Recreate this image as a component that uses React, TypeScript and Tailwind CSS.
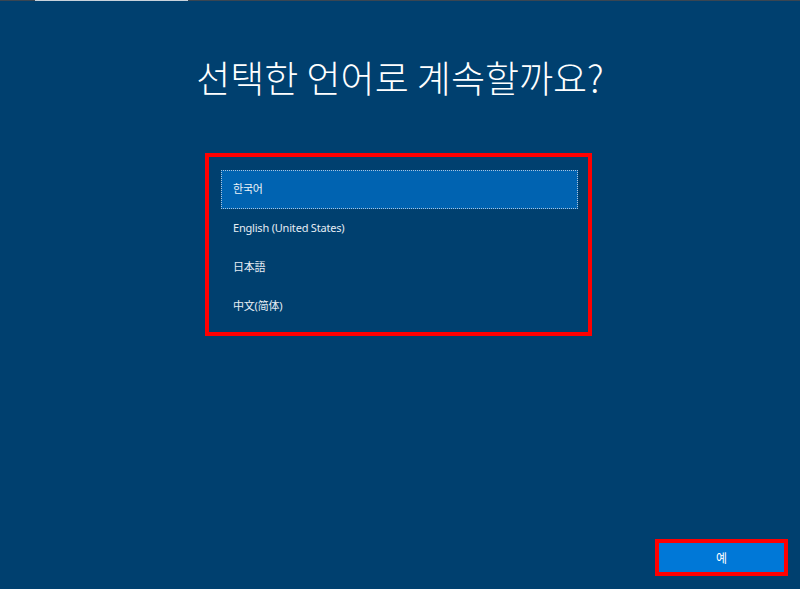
import React from "react";

export default function App() {
  const items = ["한국어", "English (United States)", "日本語", "中文(简体)"];
  return (
    <div
      className="w-[800px] h-[589px] bg-[#00406f] flex flex-col overflow-hidden text-white"
      style={{ fontFamily: '"Noto Sans", "Noto Sans CJK KR", "Noto Sans CJK SC", sans-serif' }}
    >
      <div className="h-px w-full bg-[#3a4652] flex">
        <div className="ml-[35px] w-[153px] h-px bg-[#c9d3dc]" />
      </div>
      <h1
        className="mt-[55px] text-center text-[37px] leading-[42px] font-light text-white"
        style={{ fontFamily: '"Noto Sans CJK KR", "Noto Sans", sans-serif' }}
      >
        선택한 언어로 계속할까요?
      </h1>
      <div className="mt-[55px] ml-[205px] w-[387px] h-[183px] border-4 border-[#ff0000] pt-[13px] pl-[12px] pr-[10px]">
        {items.map((t, i) => (
          <div
            key={t}
            className={
              i === 0
                ? "h-[39px] flex items-center pl-[11px] bg-[#0063b1] border border-dotted border-[#a9c4e0] text-[11px] tracking-[-0.2px] text-[#eef3f8]"
                : "h-[39px] flex items-center pl-[12px] text-[11px] tracking-[-0.2px] text-[#e6edf4]"
            }
          >
            {t}
          </div>
        ))}
      </div>
      <div className="mt-auto mb-[13px] mr-[12px] flex justify-end">
        <div className="w-[133px] h-[37px] border-4 border-[#ff0000]">
          <div
            className="w-full h-full bg-[#0078d7] flex items-center justify-center text-[12px] text-white"
            style={{ fontFamily: '"Noto Sans CJK KR", sans-serif' }}
          >
            예
          </div>
        </div>
      </div>
    </div>
  );
}
